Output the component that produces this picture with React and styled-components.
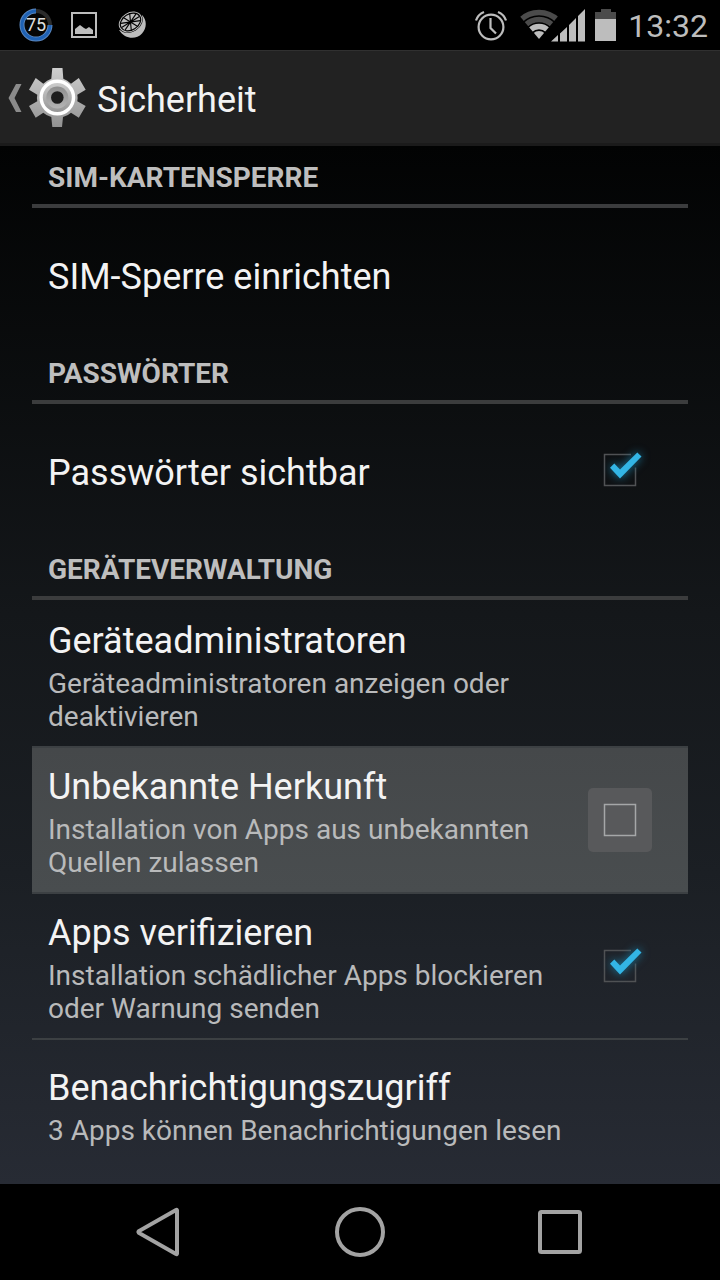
import React, { useState } from 'react'
import styled, { createGlobalStyle, css } from 'styled-components'

const SECTIONS = [
  {
    title: 'SIM-KARTENSPERRE',
    items: [{ id: 'sim', title: 'SIM-Sperre einrichten' }],
  },
  {
    title: 'PASSWÖRTER',
    items: [{ id: 'visible', title: 'Passwörter sichtbar', checkable: true }],
  },
  {
    title: 'GERÄTEVERWALTUNG',
    items: [
      { id: 'admins', title: 'Geräteadministratoren', summary: 'Geräteadministratoren anzeigen oder deaktivieren' },
      { id: 'unknown', title: 'Unbekannte Herkunft', summary: 'Installation von Apps aus unbekannten Quellen zulassen', checkable: true, pressed: true },
      { id: 'verify', title: 'Apps verifizieren', summary: 'Installation schädlicher Apps blockieren oder Warnung senden', checkable: true },
      { id: 'notifications', title: 'Benachrichtigungszugriff', summary: '3 Apps können Benachrichtigungen lesen' },
    ],
  },
]

const GlobalStyle = createGlobalStyle`
  * {
    box-sizing: border-box;
  }

  body {
    margin: 0;
    background: #000;
    font-family: Roboto, sans-serif;
  }

  button {
    margin: 0;
    padding: 0;
    border: 0;
    background: none;
    color: inherit;
    font: inherit;
    text-align: left;
  }

  svg {
    display: block;
    flex: none;
  }
`

const Screen = styled.div`
  display: flex;
  flex-direction: column;
  min-height: 100vh;
  color: #f3f3f3;
`

const StatusRow = styled.div`
  display: flex;
  justify-content: space-between;
  align-items: center;
  height: 50px;
  padding: 0 12px 0 19px;
  background: #000;
`

const Notifications = styled.div`
  display: flex;
  align-items: center;
  gap: 18px;
`

const System = styled.div`
  display: flex;
  align-items: center;
`

const AlarmIcon = styled.svg`
  margin-right: 12px;
`

const BatteryIcon = styled.svg`
  margin: 0 12px 0 9px;
`

const Clock = styled.time`
  padding-top: 2px;
  color: #bdbdbd;
  font-size: 32px;
  line-height: 48px;
`

const Header = styled.header`
  display: flex;
  align-items: center;
  gap: 10px;
  height: 96px;
  padding: 2px 8px 0;
  background: #222;
  border-top: 1px solid #303030;
  border-bottom: 3px solid #1b1b1b;
`

const UpButton = styled.button`
  display: flex;
  align-items: center;
  gap: 7px;
`

const Heading = styled.h1`
  margin: 0;
  padding-top: 4px;
  font-size: 36px;
  font-weight: 400;
  line-height: 42px;
`

const List = styled.main`
  flex: 1;
  padding: 0 32px 16px;
  background: linear-gradient(#020303, #14171a 45%, #1b1f24 70%, #272b34);
`

const Category = styled.h2`
  margin: 0;
  padding: 10px 16px 0;
  border-bottom: 4px solid #3b3c3d;
  color: #bebebe;
  font-size: 28px;
  font-weight: 700;
  line-height: 52px;
`

const Section = styled.section`
  &:first-child ${Category} {
    padding-top: 6px;
  }
`

const row = css`
  display: flex;
  align-items: center;
  width: 100%;
  min-height: 130px;
  padding: 18px 36px 13px 16px;
  border-top: 2px solid #3c4043;

  ${Category} + & {
    border-top-color: transparent;
  }
`

const RowButton = styled.button`
  ${row}
`

const RowLabel = styled.label`
  ${row}
  background: ${props => props.$pressed ? 'linear-gradient(#45484a, #494d4f)' : 'none'};
`

const RowText = styled.span`
  flex: 1;
  min-width: 0;
`

const Title = styled.span`
  display: block;
  font-size: 36px;
  line-height: 42px;
`

const Summary = styled.span`
  display: block;
  margin-top: 5px;
  color: #b9babb;
  font-size: 28px;
  line-height: 33px;
`

const CheckFrame = styled.span`
  position: relative;
  width: 64px;
  height: 64px;
  margin: -5px 0 0;
  border-radius: 5px;
  background: ${props => props.$pressed ? '#58595b' : 'none'};
`

const CheckInput = styled.input`
  display: block;
  width: 64px;
  height: 64px;
  margin: 0;
  appearance: none;
`

const CheckDrawing = styled.svg`
  position: absolute;
  inset: 0;
  pointer-events: none;
`

const Tick = styled.path`
  filter: drop-shadow(0 0 5px #1b7fa6);
`

const Nav = styled.nav`
  display: flex;
  justify-content: center;
  gap: 8px;
  height: 96px;
  background: #000;
`

const NavButton = styled.button`
  display: flex;
  justify-content: center;
  align-items: center;
  width: 192px;

  svg {
    fill: none;
    stroke: #a3a3a3;
    stroke-width: 4;
  }
`

function StatusBar() {
  return (
    <StatusRow>
      <Notifications>
        <svg width="34" height="34" viewBox="0 0 34 34" aria-hidden="true">
          <circle cx="17" cy="17" r="14" fill="#050505" stroke="#2b2b2b" strokeWidth="4" />
          <path d="M17 3A14 14 0 1 0 31 17" fill="none" stroke="#5a86bd" strokeWidth="5" />
          <path d="M17 3A14 14 0 1 0 31 17" fill="none" stroke="#1f62b5" strokeWidth="3" />
          <text x="17" y="23" textAnchor="middle" fontFamily="Roboto, sans-serif" fontSize="18" fill="#e0e0e0">75</text>
        </svg>
        <svg width="26" height="26" viewBox="0 0 26 26" aria-hidden="true">
          <rect x="1" y="1" width="24" height="24" fill="none" stroke="#bdbdbd" strokeWidth="2" />
          <path d="M4 22v-5l5-4 4 3 2 1 3-2 4 3v4z" fill="#bdbdbd" />
        </svg>
        <svg width="34" height="28" viewBox="-3 0 34 28" aria-hidden="true">
          <path d="M24 4C29 9 29 17 24 22.500C18 29 7 28.500 1 19L8 20L20 13Z" fill="#bdbdbd" />
          <g transform="rotate(-32 12.500 11)">
            <ellipse cx="12.500" cy="11" rx="13" ry="10" fill="#000" />
            <ellipse cx="12.500" cy="11" rx="12" ry="9" fill="none" stroke="#bdbdbd" />
            <ellipse cx="12.500" cy="11" rx="10.300" ry="7.400" fill="#bdbdbd" />
            <path d="M2 11H23M3.500 7L21.500 15M21.500 7L3.500 15M8.500 3L16.500 19M16.500 3L8.500 19" stroke="#000" strokeWidth="1.100" />
          </g>
        </svg>
      </Notifications>
      <System>
        <AlarmIcon width="32" height="32" viewBox="0 0 32 32" aria-hidden="true">
          <g fill="none" stroke="#bdbdbd" strokeWidth="2.2">
            <circle cx="16" cy="18" r="12.4" />
            <path d="M15.5 9V19L21 24.500M1 11.500Q3 5.500 9 3M31 11.500Q29 5.500 23 3" />
          </g>
        </AlarmIcon>
        <svg width="67" height="34" viewBox="0 0 67 34" aria-hidden="true">
          <clipPath id="fan">
            <path d="M20 31L-6 0H46z" />
          </clipPath>
          <g clipPath="url(#fan)" fill="none" strokeWidth="5.500">
            <circle cx="20" cy="31" r="26.500" stroke="#4b4b4b" />
            <circle cx="20" cy="31" r="19.500" stroke="#4b4b4b" />
            <circle cx="20" cy="31" r="12.500" stroke="#bdbdbd" />
            <circle cx="20" cy="31" r="8" fill="#bdbdbd" />
          </g>
          <path d="M32 33.500L39 27V33.500zM41 25.500L48 19V33.500H41zM50 17L57 10V33.500H50zM59 8L66 1V33.500H59z" fill="#bdbdbd" />
        </svg>
        <BatteryIcon width="21" height="32" viewBox="0 0 21 32" aria-hidden="true">
          <path d="M0 3H6V0H16V3H21V10H0z" fill="#4b4b4b" />
          <rect y="10" width="21" height="22" fill="#bdbdbd" />
        </BatteryIcon>
        <Clock>13:32</Clock>
      </System>
    </StatusRow>
  )
}

function ActionBar() {
  return (
    <Header>
      <UpButton type="button" aria-label="Nach oben">
        <svg width="14" height="28" viewBox="0 0 14 28" aria-hidden="true">
          <path d="M8 0H13.500L6.500 14L13.500 28H8L0.500 14z" fill="#8b8b8b" />
        </svg>
        <svg width="58" height="60" viewBox="0 0 58 60" aria-hidden="true">
          <defs>
            <linearGradient id="gear" x1="0" y1="0" x2="0" y2="1">
              <stop offset="0" stopColor="#cfcfcf" />
              <stop offset="1" stopColor="#929292" />
            </linearGradient>
            <linearGradient id="hub" x1="0" y1="0" x2="0" y2="1">
              <stop offset="0" stopColor="#8d8d8d" />
              <stop offset="1" stopColor="#b5b5b5" />
            </linearGradient>
          </defs>
          <path
            d="M23.300 0H33.500L34.300 10.700Q38.500 12 42 15.700L49.800 10L56.700 21.700L48.300 26.700Q49 30 48.300 33.300L56.700 38L49.800 49.700L42 44.700Q38.500 48 34 49L33 59H23.300L22.300 49Q18 48 14.300 44.700L6.700 49.700L0 38L8.300 33.300Q7.500 30 8.300 26.700L0 21.700L6.700 10L14.300 15.700Q18 12 22.300 10.700z"
            fill="url(#gear)"
          />
          <circle cx="28.300" cy="29.500" r="16.200" fill="url(#gear)" stroke="#fff" strokeWidth="3.400" />
          <circle cx="28.300" cy="29.500" r="11" fill="url(#hub)" />
          <circle cx="28.300" cy="29.500" r="6.300" fill="#1e1e1e" />
        </svg>
      </UpButton>
      <Heading>Sicherheit</Heading>
    </Header>
  )
}

function CheckBox({ id, checked, pressed, onChange }) {
  return (
    <CheckFrame $pressed={pressed}>
      <CheckInput id={id} type="checkbox" checked={checked} onChange={onChange} />
      <CheckDrawing width="64" height="64" viewBox="0 0 64 64" aria-hidden="true">
        {checked ? (
          <>
            <path d="M43 16.500H16.500V47.500H47.500V29.500" fill="none" stroke="#505254" strokeWidth="1.500" />
            <Tick d="M22 29.800L26.300 25.500L32 31.500L49.300 14.500L53.500 18.500L32 40.500z" fill="#33b5e5" />
          </>
        ) : (
          <rect x="16.500" y="16.500" width="31" height="31" fill="none" stroke="#a5a7a8" strokeWidth="1.500" />
        )}
      </CheckDrawing>
    </CheckFrame>
  )
}

function Preference({ item, checked, onToggle }) {
  const text = (
    <RowText>
      <Title>{item.title}</Title>
      {item.summary && <Summary>{item.summary}</Summary>}
    </RowText>
  )

  if (!item.checkable) return <RowButton type="button">{text}</RowButton>

  return (
    <RowLabel htmlFor={item.id} $pressed={item.pressed}>
      {text}
      <CheckBox id={item.id} checked={checked} pressed={item.pressed} onChange={() => onToggle(item.id)} />
    </RowLabel>
  )
}

function NavBar() {
  return (
    <Nav>
      <NavButton type="button" aria-label="Zurück">
        <svg width="52" height="52" viewBox="0 0 52 52" aria-hidden="true">
          <path d="M43 4.500V47.500Q43 48.500 42 48L5 27Q4 26 5 25L42 4Q43 3.500 43 4.500z" />
        </svg>
      </NavButton>
      <NavButton type="button" aria-label="Startseite">
        <svg width="52" height="52" viewBox="0 0 52 52" aria-hidden="true">
          <circle cx="26" cy="26" r="23" />
        </svg>
      </NavButton>
      <NavButton type="button" aria-label="Letzte Apps">
        <svg width="52" height="52" viewBox="0 0 52 52" aria-hidden="true">
          <rect x="6" y="6" width="40" height="40" rx="1.500" />
        </svg>
      </NavButton>
    </Nav>
  )
}

function App() {
  const [checked, setChecked] = useState({ visible: true, unknown: false, verify: true })
  const toggle = id => setChecked(prev => ({ ...prev, [id]: !prev[id] }))

  return (
    <Screen>
      <GlobalStyle />
      <StatusBar />
      <ActionBar />
      <List>
        {SECTIONS.map(section => (
          <Section key={section.title}>
            <Category>{section.title}</Category>
            {section.items.map(item => (
              <Preference key={item.id} item={item} checked={checked[item.id]} onToggle={toggle} />
            ))}
          </Section>
        ))}
      </List>
      <NavBar />
    </Screen>
  )
}

export default App
